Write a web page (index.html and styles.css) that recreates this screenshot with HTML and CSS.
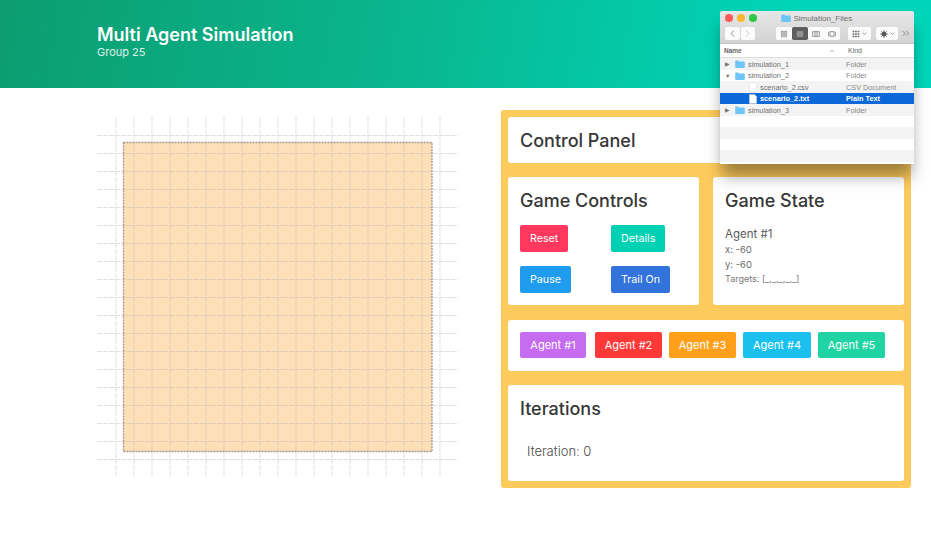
FILE: index.html
```html
<!DOCTYPE html>
<html lang="en">
<head>
  <meta charset="UTF-8">
  <meta name="viewport" content="width=device-width, initial-scale=1.0">
  <title>Multi Agent Simulation</title>
  <link rel="stylesheet" href="styles.css">
</head>
<body>
  <header class="hero">
    <h1 class="hero-title">Multi Agent Simulation</h1>
    <p class="hero-subtitle">Group 25</p>
  </header>

  <main class="content">
    <svg class="board" width="362" height="362" viewBox="-1 0 362 362">
      <rect class="board-area" x="25.5" y="25.5" width="308.5" height="309"/>
      <path class="board-lines" d="M18 0V360M36 0V360M54 0V360M72 0V360M90 0V360M108 0V360M126 0V360M144 0V360M162 0V360M180 0V360M198 0V360M216 0V360M234 0V360M252 0V360M270 0V360M288 0V360M306 0V360M324 0V360M342 0V360M-1 18.500H360M-1 36.500H360M-1 54.500H360M-1 72.500H360M-1 90.500H360M-1 108.500H360M-1 126.500H360M-1 144.500H360M-1 162.500H360M-1 180.500H360M-1 198.500H360M-1 216.500H360M-1 234.500H360M-1 252.500H360M-1 270.500H360M-1 288.500H360M-1 306.500H360M-1 324.500H360M-1 342.500H360"/>
      <rect class="board-edge" x="25.5" y="25.5" width="308.5" height="309"/>
    </svg>

    <section class="panel">
      <div class="card card-title">
        <h2 class="panel-title">Control Panel</h2>
      </div>

      <div class="panel-row">
        <div class="card card-half">
          <h2 class="card-heading">Game Controls</h2>
          <div class="controls">
            <button class="btn btn-reset">Reset</button>
            <button class="btn btn-details">Details</button>
            <button class="btn btn-pause">Pause</button>
            <button class="btn btn-trail">Trail On</button>
          </div>
        </div>
        <div class="card card-half">
          <h2 class="card-heading">Game State</h2>
          <p class="state-agent">Agent #1</p>
          <p class="state-line">x: -60</p>
          <p class="state-line">y: -60</p>
          <p class="state-line state-targets">Targets: [_,_,_,_,_]</p>
        </div>
      </div>

      <div class="card card-agents">
        <button class="btn agent agent-1">Agent #1</button>
        <button class="btn agent agent-2">Agent #2</button>
        <button class="btn agent agent-3">Agent #3</button>
        <button class="btn agent agent-4">Agent #4</button>
        <button class="btn agent agent-5">Agent #5</button>
      </div>

      <div class="card card-iterations">
        <h2 class="card-heading">Iterations</h2>
        <p class="iteration-count">Iteration: 0</p>
      </div>
    </section>
  </main>

  <div class="finder">
    <div class="finder-top">
      <div class="finder-titlebar">
        <span class="light light-red"></span>
        <span class="light light-yellow"></span>
        <span class="light light-green"></span>
        <span class="finder-name">
          <svg class="folder" viewBox="0 0 12 10"><path d="M0 1.500Q0 .5 1 .5H4L5 1.800H11Q12 1.800 12 2.800V9Q12 10 11 10H1Q0 10 0 9Z"/></svg>
          Simulation_Files
        </span>
      </div>
      <div class="finder-tools">
        <div class="tool-group nav-group">
          <span class="tool tool-nav"><svg viewBox="0 0 12 12"><path d="M8 2L4 6L8 10"/></svg></span>
          <span class="tool tool-nav tool-off"><svg viewBox="0 0 12 12"><path d="M4 2L8 6L4 10"/></svg></span>
        </div>
        <div class="tool-group view-group">
          <span class="tool tool-view"><svg viewBox="0 0 12 12"><path d="M2 2H5V5H2ZM7 2H10V5H7ZM2 7H5V10H2ZM7 7H10V10H7Z"/></svg></span>
          <span class="tool tool-view tool-active"><svg viewBox="0 0 12 12"><path d="M1 3H11M1 6H11M1 9H11"/></svg></span>
          <span class="tool tool-view"><svg viewBox="0 0 12 12"><path d="M1 2.500H11V9.500H1ZM4.500 2.500V9.500M7.500 2.500V9.500"/></svg></span>
          <span class="tool tool-view"><svg viewBox="0 0 12 12"><path d="M3 2.500H9V9.500H3ZM1 2.500V9.500M11 2.500V9.500"/></svg></span>
        </div>
        <span class="tool tool-menu">
          <svg viewBox="0 0 12 12"><path class="fill-icon" d="M1 1H3.500V3.500H1ZM4.700 1H7.200V3.500H4.700ZM8.400 1H11V3.500H8.400ZM1 4.800H3.500V7.200H1ZM4.700 4.800H7.200V7.200H4.700ZM8.400 4.800H11V7.200H8.400ZM1 8.500H3.500V11H1ZM4.700 8.500H7.200V11H4.700ZM8.400 8.500H11V11H8.400Z"/></svg>
          <svg class="chevron" viewBox="0 0 8 8"><path d="M1 2.500L4 5.500L7 2.500"/></svg>
        </span>
        <span class="tool tool-menu">
          <svg viewBox="0 0 12 12"><circle class="gear" cx="6" cy="6" r="3"/><path class="gear-teeth" d="M6 .5V11.500M.5 6H11.500M2.100 2.100L9.900 9.900M9.900 2.100L2.100 9.900"/></svg>
          <svg class="chevron" viewBox="0 0 8 8"><path d="M1 2.500L4 5.500L7 2.500"/></svg>
        </span>
        <svg class="more" viewBox="0 0 10 8"><path d="M1 1L4 4L1 7M5.500 1L8.500 4L5.500 7"/></svg>
      </div>
    </div>

    <div class="finder-head">
      <span class="col-name">Name</span>
      <svg class="sort" viewBox="0 0 8 8"><path d="M1 5.500L4 2.500L7 5.500"/></svg>
      <span class="col-kind">Kind</span>
    </div>

    <ul class="finder-list">
      <li class="file-row">
        <span class="disclosure">&#9654;</span>
        <svg class="folder" viewBox="0 0 12 10"><path d="M0 1.500Q0 .5 1 .5H4L5 1.800H11Q12 1.800 12 2.800V9Q12 10 11 10H1Q0 10 0 9Z"/></svg>
        <span class="file-name">simulation_1</span>
        <span class="file-kind">Folder</span>
      </li>
      <li class="file-row">
        <span class="disclosure">&#9660;</span>
        <svg class="folder" viewBox="0 0 12 10"><path d="M0 1.500Q0 .5 1 .5H4L5 1.800H11Q12 1.800 12 2.800V9Q12 10 11 10H1Q0 10 0 9Z"/></svg>
        <span class="file-name">simulation_2</span>
        <span class="file-kind">Folder</span>
      </li>
      <li class="file-row file-child">
        <svg class="doc" viewBox="0 0 8 10"><path d="M.5 .5H5.500L7.500 2.500V9.500H.5Z"/></svg>
        <span class="file-name">scenario_2.csv</span>
        <span class="file-kind">CSV Document</span>
      </li>
      <li class="file-row file-child file-selected">
        <svg class="doc" viewBox="0 0 8 10"><path d="M.5 .5H5.500L7.500 2.500V9.500H.5Z"/></svg>
        <span class="file-name">scenario_2.txt</span>
        <span class="file-kind">Plain Text</span>
      </li>
      <li class="file-row">
        <span class="disclosure">&#9654;</span>
        <svg class="folder" viewBox="0 0 12 10"><path d="M0 1.500Q0 .5 1 .5H4L5 1.800H11Q12 1.800 12 2.800V9Q12 10 11 10H1Q0 10 0 9Z"/></svg>
        <span class="file-name">simulation_3</span>
        <span class="file-kind">Folder</span>
      </li>
      <li class="file-row"></li>
      <li class="file-row"></li>
      <li class="file-row"></li>
      <li class="file-row"></li>
    </ul>
  </div>
</body>
</html>
```

FILE: styles.css
```css
* {
  box-sizing: border-box;
}
html, body {
  margin: 0;
  padding: 0;
  height: 547px;
  overflow: hidden;
  background: #fff;
  color: #363636;
  font-family: Inter, "Liberation Sans", sans-serif;
}
h1, h2, p, ul {
  margin: 0;
  padding: 0;
}

/* header */
.hero {
  height: 88px;
  padding: 24px 0 0 97px;
  color: #fff;
  background: linear-gradient(100deg, #0c9d70 0%, #0ab48c 40%, #00d5b9 85%);
}
.hero-title {
  font-size: 18px;
  line-height: 22px;
  font-weight: 600;
}
.hero-subtitle {
  font-size: 11px;
  line-height: 12px;
  opacity: 0.85;
}

/* page body */
.content {
  display: flex;
  align-items: flex-start;
  padding: 22px 0 0 97px;
}
.board {
  flex: none;
  margin: 7px 42px 0 0;
}
.board-area {
  fill: #fee0b8;
}
.board-lines {
  fill: none;
  stroke: #b9b2b4;
  stroke-opacity: 0.42;
  stroke-width: 1;
  stroke-dasharray: 5 1;
}
.board-edge {
  fill: none;
  stroke: #a2978a;
  stroke-width: 1.3;
  stroke-dasharray: 2 1;
}

/* control panel */
.panel {
  display: flex;
  flex-direction: column;
  gap: 14px;
  width: 410px;
  height: 378px;
  padding: 7px;
  background: #fdca5c;
  border-radius: 3px;
}
.panel-row {
  display: flex;
  gap: 14px;
}
.card {
  background: #fff;
  border-radius: 3px;
}
.card-title {
  height: 46px;
  padding: 13px 12px 0;
}
.panel-title {
  font-size: 18px;
  line-height: 22px;
  font-weight: 500;
}
.card-half {
  width: 191px;
  height: 128px;
  padding: 12px;
}
.card-heading {
  font-size: 18px;
  line-height: 24px;
  font-weight: 500;
}
.controls {
  display: grid;
  grid-template-columns: 91px auto;
  justify-items: start;
  row-gap: 14px;
  margin-top: 12px;
}
.btn {
  height: 27px;
  padding: 0 10px;
  border: 0;
  border-radius: 2px;
  color: #fff;
  font-family: inherit;
  font-size: 10.7px;
}
.btn-reset { background: #ff3860; }
.btn-details { background: #00d1b2; }
.btn-pause { background: #209cee; }
.btn-trail { background: #3273dc; }

.state-agent {
  margin-top: 12px;
  font-size: 11.5px;
  line-height: 18px;
  color: #5a5a5a;
}
.state-line {
  font-size: 9.5px;
  line-height: 14.500px;
  color: #6a6a6a;
}
.state-targets {
  font-size: 9px;
  color: #7a7a7a;
}

.card-agents {
  display: flex;
  gap: 7px;
  height: 51px;
  margin-top: 1px;
  padding: 12px;
}
.agent {
  width: 67px;
  height: 26px;
  padding: 0;
  font-size: 11px;
}
.agent-1 { background: #c56cf0; width: 66px; margin-right: 2px; }
.agent-2 { background: #ff3838; }
.agent-3 { background: #ff9f1a; }
.agent-4 { background: #1bc0ef; width: 68px; }
.agent-5 { background: #20d3a3; }

.card-iterations {
  height: 96px;
  padding: 12px;
}
.iteration-count {
  margin: 21px 0 0 7px;
  font-size: 13px;
  line-height: 18px;
  font-weight: 300;
  color: #4a4a4a;
}

/* finder window lying over the panel */
.finder {
  position: absolute;
  top: 11px;
  left: 720px;
  width: 194px;
  height: 153px;
  background: #fff;
  border-radius: 3px 3px 0 0;
  box-shadow: 0 14px 16px -2px rgba(0, 0, 0, 0.38);
  font-family: "Liberation Sans", sans-serif;
  font-size: 7.3px;
}
.finder-top {
  height: 33px;
  border-radius: 3px 3px 0 0;
  background: linear-gradient(#e8e7e8, #d4d3d4);
  border-bottom: 1px solid #c4c4c4;
}
.finder-titlebar {
  display: flex;
  align-items: center;
  gap: 4px;
  height: 13px;
  padding: 1px 0 0 5px;
}
.light {
  width: 7.5px;
  height: 7.5px;
  border-radius: 50%;
}
.light-red { background: #fc5b57; }
.light-yellow { background: #fdb630; margin-left: .5px; }
.light-green { background: #30c748; margin-left: .5px; }
.finder-name {
  display: flex;
  align-items: center;
  gap: 3px;
  margin-left: 20px;
  font-size: 8px;
  color: #6c6c6c;
}
.finder-tools {
  display: flex;
  align-items: center;
  height: 19px;
  padding: 0 0 0 5px;
}
.tool-group {
  display: flex;
}
.nav-group {
  gap: 1px;
}
.view-group {
  margin-left: 21px;
}
.tool {
  display: flex;
  align-items: center;
  justify-content: center;
  height: 13px;
  background: #fbfbfb;
  border-radius: 2px;
}
.tool svg {
  width: 8px;
  height: 8px;
  fill: none;
  stroke: #6a6a6a;
  stroke-width: 1;
}
.tool-nav {
  width: 14.5px;
}
.tool-nav svg {
  width: 9px;
  height: 9px;
}
.tool-off svg {
  stroke: #b8b8b8;
}
.tool-view {
  width: 16px;
}
.tool-active {
  background: #5e5e5e;
}
.tool-active svg {
  stroke: #f4f4f4;
}
.tool-menu {
  gap: 2px;
  width: 23px;
  margin-left: 8px;
}
.tool-menu + .tool-menu {
  width: 22px;
  margin-left: 5px;
}
.tool .fill-icon {
  fill: #6a6a6a;
  stroke: none;
}
.tool .gear {
  fill: #555;
  stroke: #555;
}
.tool .gear-teeth {
  stroke: #555;
  stroke-width: 1.500;
}
.tool .chevron {
  width: 5px;
  height: 5px;
}
.more {
  width: 8px;
  height: 7px;
  margin-left: 4px;
  fill: none;
  stroke: #777;
}
.finder-head {
  display: flex;
  align-items: center;
  height: 14px;
  padding: 0 0 0 4px;
  background: #fff;
  border-bottom: 1px solid #dcdcdc;
  font-weight: bold;
  color: #666;
  font-size: 6.500px;
}
.col-name {
  width: 105px;
}
.sort {
  width: 6px;
  height: 6px;
  margin-right: 12px;
  fill: none;
  stroke: #888;
}
.col-kind {
  font-weight: normal;
  font-size: 7px;
  color: #666;
  margin-left: 1px;
}
.finder-list {
  list-style: none;
}
.file-row {
  display: flex;
  align-items: center;
  height: 11.500px;
  padding: 1px 0 0 5px;
  color: #6f6f6f;
}
.file-row:nth-child(odd) {
  background: #f3f3f3;
}
.disclosure {
  width: 10px;
  font-size: 5.500px;
  color: #777;
}
.folder {
  flex: none;
  width: 10px;
  height: 8px;
  fill: #6ec6f6;
}
.file-name {
  width: 98px;
  margin-left: 3px;
}
.file-child {
  padding-left: 29px;
}
.file-child .file-name {
  width: 86px;
  margin-left: 3px;
}
.doc {
  flex: none;
  width: 8px;
  height: 10px;
  margin-left: 0;
  fill: #fff;
  stroke: #d5d5d5;
  stroke-width: 0.500;
}
.file-kind {
  color: #8a8a8a;
}
.file-row.file-selected {
  background: #0a68d8;
  color: #fff;
  font-weight: bold;
}
.file-selected .file-kind {
  color: #fff;
}
```
